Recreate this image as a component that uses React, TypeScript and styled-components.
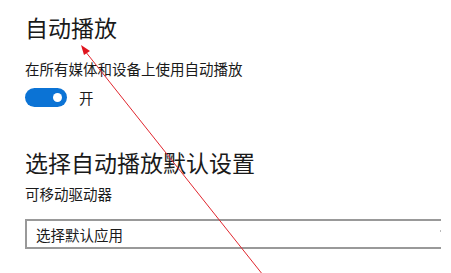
import styled, { createGlobalStyle } from 'styled-components';

const GlobalStyle = createGlobalStyle`
  html, body {
    margin: 0;
    padding: 0;
    background: #fff;
  }
  body {
    font-family: "Noto Sans CJK SC", "Microsoft YaHei", sans-serif;
    color: #111;
  }
`;

const Page = styled.div`
  position: relative;
  width: 451px;
  height: 273px;
  overflow: hidden;
  padding-left: 25px;
  box-sizing: border-box;
  display: flex;
  flex-direction: column;
`;

const Heading = styled.h1<{ $top: number }>`
  margin: ${(p) => p.$top}px 0 0;
  font-size: 23px;
  line-height: 30px;
  font-weight: 400;
  color: #1a1a1a;
  white-space: nowrap;
`;

const Label = styled.div<{ $top: number }>`
  margin-top: ${(p) => p.$top}px;
  font-size: 14.5px;
  line-height: 20px;
  color: #1a1a1a;
  white-space: nowrap;
`;

const ToggleRow = styled.div`
  margin-top: 8px;
  height: 20px;
  display: flex;
  align-items: center;
  gap: 12px;
  font-size: 14.5px;
  color: #1a1a1a;
`;

const Toggle = styled.div`
  position: relative;
  width: 42px;
  height: 19px;
  border-radius: 10px;
  background: #0b73d5;
  .knob {
    position: absolute;
    right: 5px;
    top: 5px;
    width: 9px;
    height: 9px;
    border-radius: 50%;
    background: #fff;
  }
`;

const Dropdown = styled.div`
  margin-top: 15px;
  width: 416px;
  height: 30px;
  box-sizing: border-box;
  border: 2px solid #999;
  border-right: none;
  display: flex;
  align-items: center;
  padding-left: 9px;
  font-size: 14.5px;
  color: #1a1a1a;
  position: relative;
  .dot {
    position: absolute;
    right: 0;
    top: 9px;
    width: 1px;
    height: 2px;
    background: #bbb;
  }
`;

const Overlay = styled.svg`
  position: absolute;
  left: 0;
  top: 0;
  pointer-events: none;
`;

export default function App() {
  return (
    <>
      <GlobalStyle />
      <Page>
        <Heading $top={12}>自动播放</Heading>
        <Label $top={17}>在所有媒体和设备上使用自动播放</Label>
        <ToggleRow>
          <Toggle>
            <span className="knob" />
          </Toggle>
          <span>开</span>
        </ToggleRow>
        <Heading $top={40}>选择自动播放默认设置</Heading>
        <Label $top={7}>可移动驱动器</Label>
        <Dropdown>
          选择默认应用
          <span className="dot" />
        </Dropdown>
        <Overlay width="451" height="273" viewBox="0 0 451 273">
          <line x1="263" y1="275" x2="85" y2="51" stroke="#e0262e" strokeWidth="1" />
          <polygon points="81,45 90,51 84,55" fill="#e0141e" />
        </Overlay>
      </Page>
    </>
  );
}
